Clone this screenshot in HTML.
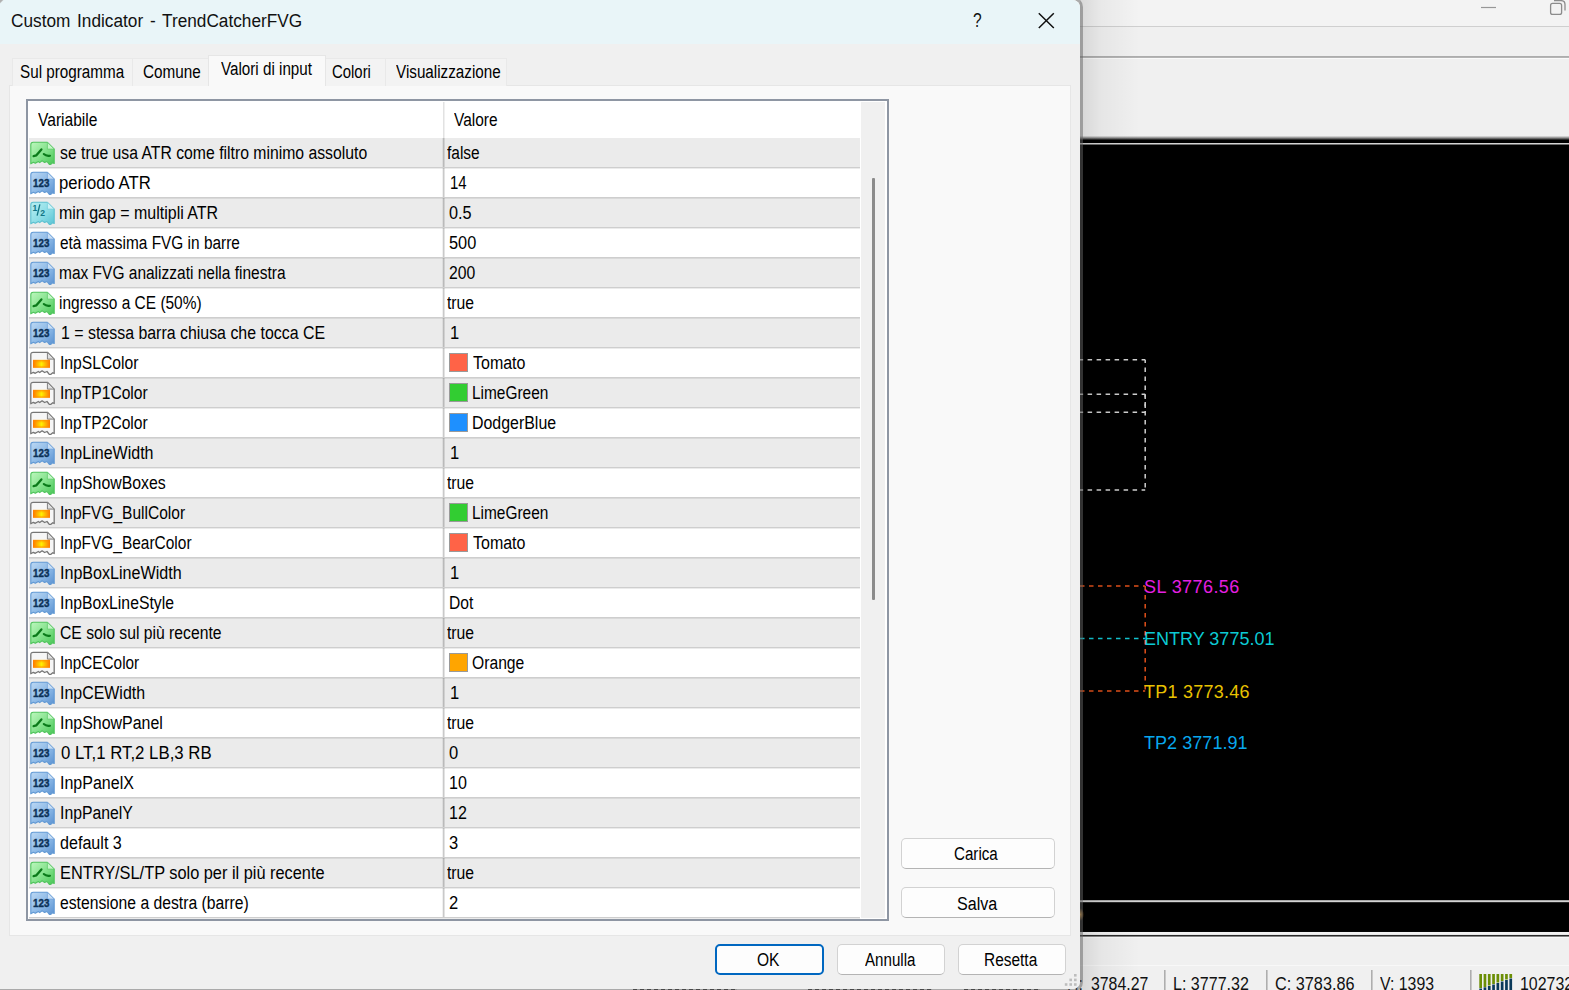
<!DOCTYPE html>
<html lang="it"><head><meta charset="utf-8"><title>Custom Indicator - TrendCatcherFVG</title>
<style>
*{box-sizing:border-box;margin:0;padding:0}
html,body{width:1569px;height:990px;overflow:hidden;background:#f0f0f0}
body{position:relative;font-family:"Liberation Sans",sans-serif;color:#000}
.abs{position:absolute}
/* ---------- background application window ---------- */
#bg{position:absolute;left:0;top:0;width:1569px;height:990px;background:#f0f0f0}
#bgtop{left:0;top:0;width:1569px;height:26px;background:#f3f3f3}
#ln1{left:0;top:26px;width:1569px;height:1px;background:#cfcfcf}
#ln2{left:0;top:56px;width:1569px;height:2px;background:linear-gradient(#a9a9a9,#b9b9b9)}
#ln2b{left:0;top:58px;width:1569px;height:1px;background:#fafafa}
#chart{left:1080px;top:140px;width:489px;height:791px;background:#000}
#chartblur{left:1080px;top:136px;width:489px;height:4px;background:linear-gradient(#e6e6e6,#a4a4a4 35%,#686868 62%,#0c0c0c)}
#cl1{left:1080px;top:143px;width:489px;height:2px;background:linear-gradient(#d4d4d4 50%,#6c6c6c 50%)}
#cl2{left:1080px;top:900px;width:489px;height:3px;background:linear-gradient(#a8a8a8 33.3%,#d4d4d4 33.3%,#d4d4d4 66.6%,#2a2a2a 66.6%)}
#cb1{left:1080px;top:931px;width:489px;height:4px;background:linear-gradient(#000 12%,#787878 25%,#f2f2f2 25%,#f2f2f2 82%,#d0d0d0 100%)}
#cb2{left:1080px;top:935px;width:489px;height:3px;background:linear-gradient(#2a2a2a 33.3%,#858585 33.3%,#858585 66.6%,#f8f8f8 66.6%)}
#stl{left:1080px;top:965px;width:489px;height:1px;background:#f8f8f8}
.lbl{position:absolute;font-size:18px;line-height:20px;white-space:nowrap;letter-spacing:.25px}
.sep{position:absolute;top:970px;width:2px;height:20px;background:linear-gradient(90deg,#a0a0a0,#d6d6d6)}
/* ---------- dialog ---------- */
#shadow{left:1080px;top:0;width:60px;height:990px;background:linear-gradient(90deg,rgba(0,0,0,.11),rgba(0,0,0,.045) 35%,rgba(0,0,0,0))}
#edge{left:-10px;top:-3px;width:1093px;height:995px;border:3px solid rgba(100,100,100,.5);border-radius:10px;background:#f0f0f0;background-clip:padding-box}
#dlg{left:0;top:0;width:1080px;height:989px;background:#f0f0f0;border-radius:0 8px 8px 0;overflow:hidden}
#tbar{left:0;top:0;width:1080px;height:44px;background:#e9f5f8}
#title{left:12px;top:9px;font-size:18px;line-height:22px;white-space:nowrap;color:#111}
#panel{left:9px;top:85px;width:1062px;height:851px;background:#f9f9f9;border:1px solid #e6e6e6}
.tab{position:absolute;top:58px;height:28px;background:#f3f3f3;border:1px solid #e9e9e9;border-bottom:none;font-size:16.5px;line-height:25px;text-align:center;white-space:nowrap;color:#111}
.tab.act{top:55px;height:31px;background:#f9f9f9;line-height:27px;border-color:#e6e6e6}
#tbl{left:26px;top:99px;width:863px;height:822px;border:2px solid #8e96a3;background:#fff}
#tin{position:absolute;left:1px;top:0;width:858px;height:818px;overflow:hidden}
#track{position:absolute;left:832px;top:1px;width:24px;height:816px;background:#f0f0f0}
#thumb{position:absolute;left:843px;top:77px;width:3px;height:422px;background:#8b8b8b;border-radius:1px}
.hd{position:absolute;top:1px;height:37px;background:#fff;font-size:16.5px;line-height:37px;white-space:nowrap}
.row{position:absolute;left:0;width:831px;height:30px;background:#fff;white-space:nowrap}
.row:before{content:"";position:absolute;left:0;top:29px;width:831px;height:2px;background:linear-gradient(#cecece 50%,rgba(0,0,0,.08) 50%);z-index:2}
.row.sh{background:#ebebeb}
.row:after{content:"";position:absolute;left:413px;top:0;width:3px;height:30px;background:linear-gradient(90deg,rgba(0,0,0,.06) 33%,rgba(0,0,0,.21) 33%,rgba(0,0,0,.21) 67%,rgba(0,0,0,.11) 67%)}
.ic{position:absolute;left:1px;top:3px}
.lb{position:absolute;display:inline-block;white-space:nowrap;transform-origin:0 50%;font-size:18.8px;color:#000}
.lb.tx{top:0;line-height:30px}
.lb.tt{font-size:17.4px;line-height:22px;color:#111;word-spacing:2px}
.lb.bt{line-height:22px}
.lb.sb{font-size:17.6px;line-height:22px;color:#111}
.sw{position:absolute;left:420px;top:5px;width:19px;height:19px;border:1px solid #9a9a9a}
.btn{position:absolute;background:#fdfdfd;border:1px solid #d2d2d2;border-bottom-color:#b4b4b4;border-radius:5px;font-size:17px;text-align:center;white-space:nowrap;color:#111}
</style></head>
<body>
<div id="bg">
 <div class="abs" id="bgtop"></div><div class="abs" id="ln1"></div><div class="abs" id="ln2"></div><div class="abs" id="ln2b"></div>
 <svg class="abs" style="left:1470px;top:0" width="99" height="26" viewBox="0 0 99 26"><path d="M11 7.5 H26" stroke="#979797" stroke-width="1.2"/><rect x="80.6" y="3.4" width="11" height="11" rx="2" fill="none" stroke="#8c8c8c" stroke-width="1.3"/><path d="M84 0.6 H91 Q95 0.6 95 4.6 V10.6" fill="none" stroke="#8c8c8c" stroke-width="1.3"/></svg>
 <div class="abs" id="chartblur"></div><div class="abs" id="chart"></div><div class="abs" id="cl1"></div><div class="abs" id="cl2"></div>
 <div class="abs" id="cb1"></div><div class="abs" id="cb2"></div><div class="abs" id="stl"></div>
 <svg class="abs" style="left:1080px;top:340px" width="489" height="380" viewBox="0 0 489 380">
  <g fill="none" stroke="#cfcfcf" stroke-width="1.5" stroke-dasharray="4.5 4.5" stroke-dashoffset="1.4">
   <path d="M0 19.8 H65.2"/><path d="M0 54.3 H65.2"/><path d="M0 72.2 H65.2"/><path d="M0 150 H65.2"/>
   <path d="M65.2 19.8 V72.2"/><path d="M65.2 54.3 V150"/>
  </g>
  <g fill="none" stroke-width="1.5" stroke-dasharray="4.5 4.5">
   <path d="M0 246 H65.2" stroke="#e2501a"/><path d="M0 298.5 H65.2" stroke="#12c4d0"/><path d="M0 351 H65.2" stroke="#e2501a"/>
   <path d="M65.2 246 V351" stroke="#e2501a"/>
  </g>
 </svg>
 <div class="lbl" style="left:1144px;top:577px;color:#e51fe0;letter-spacing:.43px">SL 3776.56</div>
 <div class="lbl" style="left:1144px;top:629px;color:#0ccad4;letter-spacing:0">ENTRY 3775.01</div>
 <div class="lbl" style="left:1144px;top:682px;color:#e8c200">TP1 3773.46</div>
 <div class="lbl" style="left:1144px;top:733px;color:#08a8ee;letter-spacing:.05px">TP2 3771.91</div>
 <div class="sep" style="left:1164px"></div><div class="sep" style="left:1266px"></div><div class="sep" style="left:1371px"></div><div class="sep" style="left:1470px"></div>
 <span id="s0" class="lb sb" style="left:1066.5px;transform:scaleX(0.9);top:973.0px;">H:</span><span id="s1" class="lb sb" style="left:1091.0px;transform:scaleX(0.9004);top:973.0px;">3784.27</span><span id="s2" class="lb sb" style="left:1173.0px;transform:scaleX(0.9125);top:973.0px;">L: 3777.32</span><span id="s3" class="lb sb" style="left:1275.0px;transform:scaleX(0.9236);top:973.0px;">C: 3783.86</span><span id="s4" class="lb sb" style="left:1380.0px;transform:scaleX(0.9002);top:973.0px;">V: 1393</span><span id="s5" class="lb sb" style="left:1520px;transform:scaleX(0.905);top:973.0px;">1027326</span>
 <svg class="abs" style="left:1478px;top:972px" width="38" height="18" viewBox="0 0 38 18">
  <g fill="#6b8e05"><rect x="1.3" y="2" width="2.7" height="14"/><rect x="5.6" y="2" width="2.7" height="13"/><rect x="9.9" y="2" width="2.7" height="11.5"/><rect x="14.2" y="2" width="2.7" height="10"/><rect x="18.5" y="2" width="2.7" height="8.5"/><rect x="22.8" y="2" width="2.7" height="7"/><rect x="27.1" y="2" width="2.7" height="5.5"/><rect x="31.4" y="2" width="2.7" height="4"/></g>
  <g fill="#0b3a5a"><rect x="1.3" y="16.5" width="2.7" height="2"/><rect x="5.6" y="15.3" width="2.7" height="3"/><rect x="9.9" y="14" width="2.7" height="4"/><rect x="14.2" y="12.5" width="2.7" height="6"/><rect x="18.5" y="11" width="2.7" height="7"/><rect x="22.8" y="9.5" width="2.7" height="9"/><rect x="27.1" y="8" width="2.7" height="10"/><rect x="31.4" y="6.5" width="2.7" height="12"/></g>
 </svg>
</div>
<div class="abs" style="left:1077px;top:908px;width:7px;height:13px;background:radial-gradient(ellipse at center,rgba(215,150,60,.95),rgba(215,150,60,0) 70%)"></div>
<div class="abs" id="shadow"></div>
<div class="abs" id="edge"></div>
<div class="abs" style="left:633px;top:988px;width:104px;height:2px;background:repeating-linear-gradient(90deg,rgba(40,40,40,.75) 0 4px,rgba(40,40,40,.15) 4px 7px)"></div>
<div class="abs" style="left:808px;top:988px;width:124px;height:2px;background:repeating-linear-gradient(90deg,rgba(40,40,40,.75) 0 4px,rgba(40,40,40,.15) 4px 7px)"></div>
<div class="abs" style="left:964px;top:988px;width:76px;height:2px;background:repeating-linear-gradient(90deg,rgba(40,40,40,.75) 0 4px,rgba(40,40,40,.15) 4px 7px)"></div>
<div class="abs" id="dlg">
 <div class="abs" id="tbar"></div>
 <span id="title" class="lb tt" style="left:11.0px;transform:scaleX(0.9575);top:10.0px;">Custom Indicator - TrendCatcherFVG</span>
 <svg class="abs" style="left:960px;top:5px" width="110" height="34" viewBox="0 0 110 34"><path d="M78.8 8.2 L93.8 23 M93.8 8.2 L78.8 23" stroke="#111" stroke-width="1.5" fill="none"/></svg>
 <div class="abs" style="left:972.5px;top:9px;font-size:21px;line-height:22px;color:#111;transform:scaleX(.74);transform-origin:0 50%">?</div>
 <div class="abs" id="panel"></div>
 <div class="tab" style="left:12px;width:121px"></div><span id="t1" class="lb bt" style="left:19.5px;transform:scaleX(0.8112);top:61.0px;">Sul programma</span>
 <div class="tab" style="left:132px;width:77px"></div><span id="t2" class="lb bt" style="left:142.5px;transform:scaleX(0.8133);top:61.0px;">Comune</span>
 <div class="tab" style="left:325px;width:61px"></div><span id="t4" class="lb bt" style="left:331.5px;transform:scaleX(0.7935);top:61.0px;">Colori</span>
 <div class="tab" style="left:385px;width:122px"></div><span id="t5" class="lb bt" style="left:395.5px;transform:scaleX(0.8114);top:61.0px;">Visualizzazione</span>
 <div class="tab act" style="left:208px;width:118px"></div><span id="t3" class="lb bt" style="left:220.5px;transform:scaleX(0.8096);top:58.0px;">Valori di input</span>
 <div class="abs" id="tbl"><div id="tin">
  <div class="hd" style="left:1px;width:414px"></div><span id="h1" class="lb bt" style="left:9.0px;transform:scaleX(0.829);top:8.0px;">Variabile</span>
  <div class="hd" style="left:417px;width:413px"></div><span id="h2" class="lb bt" style="left:425.0px;transform:scaleX(0.8229);top:8.0px;">Valore</span>
  <div class="abs" style="left:414px;top:1px;width:2px;height:37px;background:linear-gradient(90deg,#e2e2e2 50%,#f0f0f0 50%)"></div>
  <div id="track"></div><div id="thumb"></div>
<div class="row sh" style="top:37px"><svg class="ic" width="25" height="24" viewBox="0 0 25 24"><defs><linearGradient id="g0" x1="0" y1="0" x2="1" y2="1"><stop offset="0" stop-color="#bdf7bd"/><stop offset=".55" stop-color="#7fe088"/><stop offset="1" stop-color="#45c454"/></linearGradient></defs><g transform="translate(0,.5)"><path d="M3.2 0.8 H17.4 L24.2 7.6 V22 L22.8 21.2 L19.9 23.6 L17 20 L14.6 21 L12.1 19.3 L9.7 21.1 L8.3 20 L5.3 21.8 L3.4 20.8 L0.8 22.3 V3.2 Q0.8 0.8 3.2 0.8 Z" fill="url(#g0)" stroke="#4fc45c" stroke-width="1.1" stroke-linejoin="round"/><path d="M17.4 0.8 V7.6 H24.2 Z" fill="#c6f6c8" stroke="#63cc6e" stroke-width=".8"/><path d="M3.6 14.6 L6.4 13.8 L11.4 7.9" fill="none" stroke="#0b7a1a" stroke-width="2.3" stroke-linecap="round" stroke-linejoin="round"/><path d="M13.8 12.6 Q16.2 14.9 20 14.2" fill="none" stroke="#0b7a1a" stroke-width="2.1" stroke-linecap="round"/></g></svg><span id="n0" class="lb tx" style="left:31.0px;transform:scaleX(0.8392);">se true usa ATR come filtro minimo assoluto</span><span id="v0" class="lb tx" style="left:418.0px;transform:scaleX(0.8243);">false</span></div>
<div class="row" style="top:67px"><svg class="ic" width="25" height="24" viewBox="0 0 25 24"><defs><linearGradient id="g1" x1="0" y1="0" x2="1" y2="1"><stop offset="0" stop-color="#bcd8f4"/><stop offset=".55" stop-color="#8bb8e6"/><stop offset="1" stop-color="#5990d0"/></linearGradient></defs><g transform="translate(0,.5)"><path d="M3.2 0.8 H17.4 L24.2 7.6 V22 L22.8 21.2 L19.9 23.6 L17 20 L14.6 21 L12.1 19.3 L9.7 21.1 L8.3 20 L5.3 21.8 L3.4 20.8 L0.8 22.3 V3.2 Q0.8 0.8 3.2 0.8 Z" fill="url(#g1)" stroke="#6199d4" stroke-width="1.1" stroke-linejoin="round"/><path d="M17.4 0.8 V7.6 H24.2 Z" fill="#c8def4" stroke="#76a6dc" stroke-width=".8"/><text x="11.2" y="15.9" text-anchor="middle" font-family="Liberation Sans, sans-serif" font-weight="bold" font-size="10.2" textLength="16.2" lengthAdjust="spacingAndGlyphs" fill="#0c3157" stroke="#0c3157" stroke-width=".4">123</text></g></svg><span id="n1" class="lb tx" style="left:30.0px;transform:scaleX(0.8903);">periodo ATR</span><span id="v1" class="lb tx" style="left:421.0px;transform:scaleX(0.7971);">14</span></div>
<div class="row sh" style="top:97px"><svg class="ic" width="25" height="24" viewBox="0 0 25 24"><defs><linearGradient id="g2" x1="0" y1="0" x2="1" y2="1"><stop offset="0" stop-color="#b8eef2"/><stop offset=".55" stop-color="#8cdde6"/><stop offset="1" stop-color="#56c2d4"/></linearGradient></defs><g transform="translate(0,.5)"><path d="M3.2 0.8 H17.4 L24.2 7.6 V22 L22.8 21.2 L19.9 23.6 L17 20 L14.6 21 L12.1 19.3 L9.7 21.1 L8.3 20 L5.3 21.8 L3.4 20.8 L0.8 22.3 V3.2 Q0.8 0.8 3.2 0.8 Z" fill="url(#g2)" stroke="#5cc0d0" stroke-width="1.1" stroke-linejoin="round"/><path d="M17.4 0.8 V7.6 H24.2 Z" fill="#cdf2f6" stroke="#78cfdc" stroke-width=".8"/><text x="2.4" y="9.2" font-family="Liberation Sans, sans-serif" font-weight="bold" font-size="8.6" fill="#127585">1</text><path d="M9.9 2.8 L7.1 14.2" stroke="#127585" stroke-width="1.3" fill="none"/><text x="10.2" y="14.4" font-family="Liberation Sans, sans-serif" font-weight="bold" font-size="8.6" fill="#127585">2</text></g></svg><span id="n2" class="lb tx" style="left:30.0px;transform:scaleX(0.8505);">min gap = multipli ATR</span><span id="v2" class="lb tx" style="left:420.0px;transform:scaleX(0.8644);">0.5</span></div>
<div class="row" style="top:127px"><svg class="ic" width="25" height="24" viewBox="0 0 25 24"><defs><linearGradient id="g3" x1="0" y1="0" x2="1" y2="1"><stop offset="0" stop-color="#bcd8f4"/><stop offset=".55" stop-color="#8bb8e6"/><stop offset="1" stop-color="#5990d0"/></linearGradient></defs><g transform="translate(0,.5)"><path d="M3.2 0.8 H17.4 L24.2 7.6 V22 L22.8 21.2 L19.9 23.6 L17 20 L14.6 21 L12.1 19.3 L9.7 21.1 L8.3 20 L5.3 21.8 L3.4 20.8 L0.8 22.3 V3.2 Q0.8 0.8 3.2 0.8 Z" fill="url(#g3)" stroke="#6199d4" stroke-width="1.1" stroke-linejoin="round"/><path d="M17.4 0.8 V7.6 H24.2 Z" fill="#c8def4" stroke="#76a6dc" stroke-width=".8"/><text x="11.2" y="15.9" text-anchor="middle" font-family="Liberation Sans, sans-serif" font-weight="bold" font-size="10.2" textLength="16.2" lengthAdjust="spacingAndGlyphs" fill="#0c3157" stroke="#0c3157" stroke-width=".4">123</text></g></svg><span id="n3" class="lb tx" style="left:31.0px;transform:scaleX(0.8207);">età massima FVG in barre</span><span id="v3" class="lb tx" style="left:420.0px;transform:scaleX(0.8696);">500</span></div>
<div class="row sh" style="top:157px"><svg class="ic" width="25" height="24" viewBox="0 0 25 24"><defs><linearGradient id="g4" x1="0" y1="0" x2="1" y2="1"><stop offset="0" stop-color="#bcd8f4"/><stop offset=".55" stop-color="#8bb8e6"/><stop offset="1" stop-color="#5990d0"/></linearGradient></defs><g transform="translate(0,.5)"><path d="M3.2 0.8 H17.4 L24.2 7.6 V22 L22.8 21.2 L19.9 23.6 L17 20 L14.6 21 L12.1 19.3 L9.7 21.1 L8.3 20 L5.3 21.8 L3.4 20.8 L0.8 22.3 V3.2 Q0.8 0.8 3.2 0.8 Z" fill="url(#g4)" stroke="#6199d4" stroke-width="1.1" stroke-linejoin="round"/><path d="M17.4 0.8 V7.6 H24.2 Z" fill="#c8def4" stroke="#76a6dc" stroke-width=".8"/><text x="11.2" y="15.9" text-anchor="middle" font-family="Liberation Sans, sans-serif" font-weight="bold" font-size="10.2" textLength="16.2" lengthAdjust="spacingAndGlyphs" fill="#0c3157" stroke="#0c3157" stroke-width=".4">123</text></g></svg><span id="n4" class="lb tx" style="left:30.0px;transform:scaleX(0.8253);">max FVG analizzati nella finestra</span><span id="v4" class="lb tx" style="left:420.0px;transform:scaleX(0.8365);">200</span></div>
<div class="row" style="top:187px"><svg class="ic" width="25" height="24" viewBox="0 0 25 24"><defs><linearGradient id="g5" x1="0" y1="0" x2="1" y2="1"><stop offset="0" stop-color="#bdf7bd"/><stop offset=".55" stop-color="#7fe088"/><stop offset="1" stop-color="#45c454"/></linearGradient></defs><g transform="translate(0,.5)"><path d="M3.2 0.8 H17.4 L24.2 7.6 V22 L22.8 21.2 L19.9 23.6 L17 20 L14.6 21 L12.1 19.3 L9.7 21.1 L8.3 20 L5.3 21.8 L3.4 20.8 L0.8 22.3 V3.2 Q0.8 0.8 3.2 0.8 Z" fill="url(#g5)" stroke="#4fc45c" stroke-width="1.1" stroke-linejoin="round"/><path d="M17.4 0.8 V7.6 H24.2 Z" fill="#c6f6c8" stroke="#63cc6e" stroke-width=".8"/><path d="M3.6 14.6 L6.4 13.8 L11.4 7.9" fill="none" stroke="#0b7a1a" stroke-width="2.3" stroke-linecap="round" stroke-linejoin="round"/><path d="M13.8 12.6 Q16.2 14.9 20 14.2" fill="none" stroke="#0b7a1a" stroke-width="2.1" stroke-linecap="round"/></g></svg><span id="n5" class="lb tx" style="left:30.0px;transform:scaleX(0.823);">ingresso a CE (50%)</span><span id="v5" class="lb tx" style="left:418.0px;transform:scaleX(0.838);">true</span></div>
<div class="row sh" style="top:217px"><svg class="ic" width="25" height="24" viewBox="0 0 25 24"><defs><linearGradient id="g6" x1="0" y1="0" x2="1" y2="1"><stop offset="0" stop-color="#bcd8f4"/><stop offset=".55" stop-color="#8bb8e6"/><stop offset="1" stop-color="#5990d0"/></linearGradient></defs><g transform="translate(0,.5)"><path d="M3.2 0.8 H17.4 L24.2 7.6 V22 L22.8 21.2 L19.9 23.6 L17 20 L14.6 21 L12.1 19.3 L9.7 21.1 L8.3 20 L5.3 21.8 L3.4 20.8 L0.8 22.3 V3.2 Q0.8 0.8 3.2 0.8 Z" fill="url(#g6)" stroke="#6199d4" stroke-width="1.1" stroke-linejoin="round"/><path d="M17.4 0.8 V7.6 H24.2 Z" fill="#c8def4" stroke="#76a6dc" stroke-width=".8"/><text x="11.2" y="15.9" text-anchor="middle" font-family="Liberation Sans, sans-serif" font-weight="bold" font-size="10.2" textLength="16.2" lengthAdjust="spacingAndGlyphs" fill="#0c3157" stroke="#0c3157" stroke-width=".4">123</text></g></svg><span id="n6" class="lb tx" style="left:32.0px;transform:scaleX(0.8473);">1 = stessa barra chiusa che tocca CE</span><span id="v6" class="lb tx" style="left:421.0px;transform:scaleX(0.88);">1</span></div>
<div class="row" style="top:247px"><svg class="ic" width="25" height="24" viewBox="0 0 25 24"><defs><linearGradient id="g7" x1="0" y1="0" x2="1" y2="0"><stop offset="0" stop-color="#ff7400"/><stop offset=".5" stop-color="#fff000"/><stop offset="1" stop-color="#ff7400"/></linearGradient><linearGradient id="h7" x1="0" y1="0" x2="0" y2="1"><stop offset="0" stop-color="#ff8a00" stop-opacity=".85"/><stop offset=".4" stop-color="#ff8a00" stop-opacity="0"/><stop offset=".7" stop-color="#ff8a00" stop-opacity="0"/><stop offset="1" stop-color="#ff8a00" stop-opacity=".85"/></linearGradient></defs><g transform="translate(0,.5)"><path d="M3.2 0.8 H17.4 L24.2 7.6 V22 L22.8 21.2 L19.9 23.6 L17 20 L14.6 21 L12.1 19.3 L9.7 21.1 L8.3 20 L5.3 21.8 L3.4 20.8 L0.8 22.3 V3.2 Q0.8 0.8 3.2 0.8 Z" fill="#f6f6f6" stroke="#767676" stroke-width="1.3" stroke-linejoin="round"/><path d="M17.4 0.8 V7.6 H24.2 Z" fill="#e0e0e0" stroke="#808080" stroke-width="1"/><rect x="3" y="8.4" width="17" height="7.8" fill="url(#g7)"/><rect x="3" y="8.4" width="17" height="7.8" fill="url(#h7)"/></g></svg><span id="n7" class="lb tx" style="left:31.0px;transform:scaleX(0.835);">InpSLColor</span><span class="sw" style="background:#ff6347"></span><span id="v7" class="lb tx" style="left:444.0px;transform:scaleX(0.8511);">Tomato</span></div>
<div class="row sh" style="top:277px"><svg class="ic" width="25" height="24" viewBox="0 0 25 24"><defs><linearGradient id="g8" x1="0" y1="0" x2="1" y2="0"><stop offset="0" stop-color="#ff7400"/><stop offset=".5" stop-color="#fff000"/><stop offset="1" stop-color="#ff7400"/></linearGradient><linearGradient id="h8" x1="0" y1="0" x2="0" y2="1"><stop offset="0" stop-color="#ff8a00" stop-opacity=".85"/><stop offset=".4" stop-color="#ff8a00" stop-opacity="0"/><stop offset=".7" stop-color="#ff8a00" stop-opacity="0"/><stop offset="1" stop-color="#ff8a00" stop-opacity=".85"/></linearGradient></defs><g transform="translate(0,.5)"><path d="M3.2 0.8 H17.4 L24.2 7.6 V22 L22.8 21.2 L19.9 23.6 L17 20 L14.6 21 L12.1 19.3 L9.7 21.1 L8.3 20 L5.3 21.8 L3.4 20.8 L0.8 22.3 V3.2 Q0.8 0.8 3.2 0.8 Z" fill="#f6f6f6" stroke="#767676" stroke-width="1.3" stroke-linejoin="round"/><path d="M17.4 0.8 V7.6 H24.2 Z" fill="#e0e0e0" stroke="#808080" stroke-width="1"/><rect x="3" y="8.4" width="17" height="7.8" fill="url(#g8)"/><rect x="3" y="8.4" width="17" height="7.8" fill="url(#h8)"/></g></svg><span id="n8" class="lb tx" style="left:31.0px;transform:scaleX(0.8321);">InpTP1Color</span><span class="sw" style="background:#32cd32"></span><span id="v8" class="lb tx" style="left:443.0px;transform:scaleX(0.8218);">LimeGreen</span></div>
<div class="row" style="top:307px"><svg class="ic" width="25" height="24" viewBox="0 0 25 24"><defs><linearGradient id="g9" x1="0" y1="0" x2="1" y2="0"><stop offset="0" stop-color="#ff7400"/><stop offset=".5" stop-color="#fff000"/><stop offset="1" stop-color="#ff7400"/></linearGradient><linearGradient id="h9" x1="0" y1="0" x2="0" y2="1"><stop offset="0" stop-color="#ff8a00" stop-opacity=".85"/><stop offset=".4" stop-color="#ff8a00" stop-opacity="0"/><stop offset=".7" stop-color="#ff8a00" stop-opacity="0"/><stop offset="1" stop-color="#ff8a00" stop-opacity=".85"/></linearGradient></defs><g transform="translate(0,.5)"><path d="M3.2 0.8 H17.4 L24.2 7.6 V22 L22.8 21.2 L19.9 23.6 L17 20 L14.6 21 L12.1 19.3 L9.7 21.1 L8.3 20 L5.3 21.8 L3.4 20.8 L0.8 22.3 V3.2 Q0.8 0.8 3.2 0.8 Z" fill="#f6f6f6" stroke="#767676" stroke-width="1.3" stroke-linejoin="round"/><path d="M17.4 0.8 V7.6 H24.2 Z" fill="#e0e0e0" stroke="#808080" stroke-width="1"/><rect x="3" y="8.4" width="17" height="7.8" fill="url(#g9)"/><rect x="3" y="8.4" width="17" height="7.8" fill="url(#h9)"/></g></svg><span id="n9" class="lb tx" style="left:31.0px;transform:scaleX(0.8321);">InpTP2Color</span><span class="sw" style="background:#1e90ff"></span><span id="v9" class="lb tx" style="left:443.0px;transform:scaleX(0.848);">DodgerBlue</span></div>
<div class="row sh" style="top:337px"><svg class="ic" width="25" height="24" viewBox="0 0 25 24"><defs><linearGradient id="g10" x1="0" y1="0" x2="1" y2="1"><stop offset="0" stop-color="#bcd8f4"/><stop offset=".55" stop-color="#8bb8e6"/><stop offset="1" stop-color="#5990d0"/></linearGradient></defs><g transform="translate(0,.5)"><path d="M3.2 0.8 H17.4 L24.2 7.6 V22 L22.8 21.2 L19.9 23.6 L17 20 L14.6 21 L12.1 19.3 L9.7 21.1 L8.3 20 L5.3 21.8 L3.4 20.8 L0.8 22.3 V3.2 Q0.8 0.8 3.2 0.8 Z" fill="url(#g10)" stroke="#6199d4" stroke-width="1.1" stroke-linejoin="round"/><path d="M17.4 0.8 V7.6 H24.2 Z" fill="#c8def4" stroke="#76a6dc" stroke-width=".8"/><text x="11.2" y="15.9" text-anchor="middle" font-family="Liberation Sans, sans-serif" font-weight="bold" font-size="10.2" textLength="16.2" lengthAdjust="spacingAndGlyphs" fill="#0c3157" stroke="#0c3157" stroke-width=".4">123</text></g></svg><span id="n10" class="lb tx" style="left:31.0px;transform:scaleX(0.8532);">InpLineWidth</span><span id="v10" class="lb tx" style="left:421.0px;transform:scaleX(0.88);">1</span></div>
<div class="row" style="top:367px"><svg class="ic" width="25" height="24" viewBox="0 0 25 24"><defs><linearGradient id="g11" x1="0" y1="0" x2="1" y2="1"><stop offset="0" stop-color="#bdf7bd"/><stop offset=".55" stop-color="#7fe088"/><stop offset="1" stop-color="#45c454"/></linearGradient></defs><g transform="translate(0,.5)"><path d="M3.2 0.8 H17.4 L24.2 7.6 V22 L22.8 21.2 L19.9 23.6 L17 20 L14.6 21 L12.1 19.3 L9.7 21.1 L8.3 20 L5.3 21.8 L3.4 20.8 L0.8 22.3 V3.2 Q0.8 0.8 3.2 0.8 Z" fill="url(#g11)" stroke="#4fc45c" stroke-width="1.1" stroke-linejoin="round"/><path d="M17.4 0.8 V7.6 H24.2 Z" fill="#c6f6c8" stroke="#63cc6e" stroke-width=".8"/><path d="M3.6 14.6 L6.4 13.8 L11.4 7.9" fill="none" stroke="#0b7a1a" stroke-width="2.3" stroke-linecap="round" stroke-linejoin="round"/><path d="M13.8 12.6 Q16.2 14.9 20 14.2" fill="none" stroke="#0b7a1a" stroke-width="2.1" stroke-linecap="round"/></g></svg><span id="n11" class="lb tx" style="left:31.0px;transform:scaleX(0.8434);">InpShowBoxes</span><span id="v11" class="lb tx" style="left:418.0px;transform:scaleX(0.838);">true</span></div>
<div class="row sh" style="top:397px"><svg class="ic" width="25" height="24" viewBox="0 0 25 24"><defs><linearGradient id="g12" x1="0" y1="0" x2="1" y2="0"><stop offset="0" stop-color="#ff7400"/><stop offset=".5" stop-color="#fff000"/><stop offset="1" stop-color="#ff7400"/></linearGradient><linearGradient id="h12" x1="0" y1="0" x2="0" y2="1"><stop offset="0" stop-color="#ff8a00" stop-opacity=".85"/><stop offset=".4" stop-color="#ff8a00" stop-opacity="0"/><stop offset=".7" stop-color="#ff8a00" stop-opacity="0"/><stop offset="1" stop-color="#ff8a00" stop-opacity=".85"/></linearGradient></defs><g transform="translate(0,.5)"><path d="M3.2 0.8 H17.4 L24.2 7.6 V22 L22.8 21.2 L19.9 23.6 L17 20 L14.6 21 L12.1 19.3 L9.7 21.1 L8.3 20 L5.3 21.8 L3.4 20.8 L0.8 22.3 V3.2 Q0.8 0.8 3.2 0.8 Z" fill="#f6f6f6" stroke="#767676" stroke-width="1.3" stroke-linejoin="round"/><path d="M17.4 0.8 V7.6 H24.2 Z" fill="#e0e0e0" stroke="#808080" stroke-width="1"/><rect x="3" y="8.4" width="17" height="7.8" fill="url(#g12)"/><rect x="3" y="8.4" width="17" height="7.8" fill="url(#h12)"/></g></svg><span id="n12" class="lb tx" style="left:31.0px;transform:scaleX(0.8263);">InpFVG_BullColor</span><span class="sw" style="background:#32cd32"></span><span id="v12" class="lb tx" style="left:443.0px;transform:scaleX(0.8218);">LimeGreen</span></div>
<div class="row" style="top:427px"><svg class="ic" width="25" height="24" viewBox="0 0 25 24"><defs><linearGradient id="g13" x1="0" y1="0" x2="1" y2="0"><stop offset="0" stop-color="#ff7400"/><stop offset=".5" stop-color="#fff000"/><stop offset="1" stop-color="#ff7400"/></linearGradient><linearGradient id="h13" x1="0" y1="0" x2="0" y2="1"><stop offset="0" stop-color="#ff8a00" stop-opacity=".85"/><stop offset=".4" stop-color="#ff8a00" stop-opacity="0"/><stop offset=".7" stop-color="#ff8a00" stop-opacity="0"/><stop offset="1" stop-color="#ff8a00" stop-opacity=".85"/></linearGradient></defs><g transform="translate(0,.5)"><path d="M3.2 0.8 H17.4 L24.2 7.6 V22 L22.8 21.2 L19.9 23.6 L17 20 L14.6 21 L12.1 19.3 L9.7 21.1 L8.3 20 L5.3 21.8 L3.4 20.8 L0.8 22.3 V3.2 Q0.8 0.8 3.2 0.8 Z" fill="#f6f6f6" stroke="#767676" stroke-width="1.3" stroke-linejoin="round"/><path d="M17.4 0.8 V7.6 H24.2 Z" fill="#e0e0e0" stroke="#808080" stroke-width="1"/><rect x="3" y="8.4" width="17" height="7.8" fill="url(#g13)"/><rect x="3" y="8.4" width="17" height="7.8" fill="url(#h13)"/></g></svg><span id="n13" class="lb tx" style="left:31.0px;transform:scaleX(0.8236);">InpFVG_BearColor</span><span class="sw" style="background:#ff6347"></span><span id="v13" class="lb tx" style="left:444.0px;transform:scaleX(0.8511);">Tomato</span></div>
<div class="row sh" style="top:457px"><svg class="ic" width="25" height="24" viewBox="0 0 25 24"><defs><linearGradient id="g14" x1="0" y1="0" x2="1" y2="1"><stop offset="0" stop-color="#bcd8f4"/><stop offset=".55" stop-color="#8bb8e6"/><stop offset="1" stop-color="#5990d0"/></linearGradient></defs><g transform="translate(0,.5)"><path d="M3.2 0.8 H17.4 L24.2 7.6 V22 L22.8 21.2 L19.9 23.6 L17 20 L14.6 21 L12.1 19.3 L9.7 21.1 L8.3 20 L5.3 21.8 L3.4 20.8 L0.8 22.3 V3.2 Q0.8 0.8 3.2 0.8 Z" fill="url(#g14)" stroke="#6199d4" stroke-width="1.1" stroke-linejoin="round"/><path d="M17.4 0.8 V7.6 H24.2 Z" fill="#c8def4" stroke="#76a6dc" stroke-width=".8"/><text x="11.2" y="15.9" text-anchor="middle" font-family="Liberation Sans, sans-serif" font-weight="bold" font-size="10.2" textLength="16.2" lengthAdjust="spacingAndGlyphs" fill="#0c3157" stroke="#0c3157" stroke-width=".4">123</text></g></svg><span id="n14" class="lb tx" style="left:31.0px;transform:scaleX(0.8567);">InpBoxLineWidth</span><span id="v14" class="lb tx" style="left:421.0px;transform:scaleX(0.88);">1</span></div>
<div class="row" style="top:487px"><svg class="ic" width="25" height="24" viewBox="0 0 25 24"><defs><linearGradient id="g15" x1="0" y1="0" x2="1" y2="1"><stop offset="0" stop-color="#bcd8f4"/><stop offset=".55" stop-color="#8bb8e6"/><stop offset="1" stop-color="#5990d0"/></linearGradient></defs><g transform="translate(0,.5)"><path d="M3.2 0.8 H17.4 L24.2 7.6 V22 L22.8 21.2 L19.9 23.6 L17 20 L14.6 21 L12.1 19.3 L9.7 21.1 L8.3 20 L5.3 21.8 L3.4 20.8 L0.8 22.3 V3.2 Q0.8 0.8 3.2 0.8 Z" fill="url(#g15)" stroke="#6199d4" stroke-width="1.1" stroke-linejoin="round"/><path d="M17.4 0.8 V7.6 H24.2 Z" fill="#c8def4" stroke="#76a6dc" stroke-width=".8"/><text x="11.2" y="15.9" text-anchor="middle" font-family="Liberation Sans, sans-serif" font-weight="bold" font-size="10.2" textLength="16.2" lengthAdjust="spacingAndGlyphs" fill="#0c3157" stroke="#0c3157" stroke-width=".4">123</text></g></svg><span id="n15" class="lb tx" style="left:31.0px;transform:scaleX(0.8396);">InpBoxLineStyle</span><span id="v15" class="lb tx" style="left:420.0px;transform:scaleX(0.8311);">Dot</span></div>
<div class="row sh" style="top:517px"><svg class="ic" width="25" height="24" viewBox="0 0 25 24"><defs><linearGradient id="g16" x1="0" y1="0" x2="1" y2="1"><stop offset="0" stop-color="#bdf7bd"/><stop offset=".55" stop-color="#7fe088"/><stop offset="1" stop-color="#45c454"/></linearGradient></defs><g transform="translate(0,.5)"><path d="M3.2 0.8 H17.4 L24.2 7.6 V22 L22.8 21.2 L19.9 23.6 L17 20 L14.6 21 L12.1 19.3 L9.7 21.1 L8.3 20 L5.3 21.8 L3.4 20.8 L0.8 22.3 V3.2 Q0.8 0.8 3.2 0.8 Z" fill="url(#g16)" stroke="#4fc45c" stroke-width="1.1" stroke-linejoin="round"/><path d="M17.4 0.8 V7.6 H24.2 Z" fill="#c6f6c8" stroke="#63cc6e" stroke-width=".8"/><path d="M3.6 14.6 L6.4 13.8 L11.4 7.9" fill="none" stroke="#0b7a1a" stroke-width="2.3" stroke-linecap="round" stroke-linejoin="round"/><path d="M13.8 12.6 Q16.2 14.9 20 14.2" fill="none" stroke="#0b7a1a" stroke-width="2.1" stroke-linecap="round"/></g></svg><span id="n16" class="lb tx" style="left:31.0px;transform:scaleX(0.8362);">CE solo sul più recente</span><span id="v16" class="lb tx" style="left:418.0px;transform:scaleX(0.838);">true</span></div>
<div class="row" style="top:547px"><svg class="ic" width="25" height="24" viewBox="0 0 25 24"><defs><linearGradient id="g17" x1="0" y1="0" x2="1" y2="0"><stop offset="0" stop-color="#ff7400"/><stop offset=".5" stop-color="#fff000"/><stop offset="1" stop-color="#ff7400"/></linearGradient><linearGradient id="h17" x1="0" y1="0" x2="0" y2="1"><stop offset="0" stop-color="#ff8a00" stop-opacity=".85"/><stop offset=".4" stop-color="#ff8a00" stop-opacity="0"/><stop offset=".7" stop-color="#ff8a00" stop-opacity="0"/><stop offset="1" stop-color="#ff8a00" stop-opacity=".85"/></linearGradient></defs><g transform="translate(0,.5)"><path d="M3.2 0.8 H17.4 L24.2 7.6 V22 L22.8 21.2 L19.9 23.6 L17 20 L14.6 21 L12.1 19.3 L9.7 21.1 L8.3 20 L5.3 21.8 L3.4 20.8 L0.8 22.3 V3.2 Q0.8 0.8 3.2 0.8 Z" fill="#f6f6f6" stroke="#767676" stroke-width="1.3" stroke-linejoin="round"/><path d="M17.4 0.8 V7.6 H24.2 Z" fill="#e0e0e0" stroke="#808080" stroke-width="1"/><rect x="3" y="8.4" width="17" height="7.8" fill="url(#g17)"/><rect x="3" y="8.4" width="17" height="7.8" fill="url(#h17)"/></g></svg><span id="n17" class="lb tx" style="left:31.0px;transform:scaleX(0.8154);">InpCEColor</span><span class="sw" style="background:#ffa500"></span><span id="v17" class="lb tx" style="left:443.0px;transform:scaleX(0.8348);">Orange</span></div>
<div class="row sh" style="top:577px"><svg class="ic" width="25" height="24" viewBox="0 0 25 24"><defs><linearGradient id="g18" x1="0" y1="0" x2="1" y2="1"><stop offset="0" stop-color="#bcd8f4"/><stop offset=".55" stop-color="#8bb8e6"/><stop offset="1" stop-color="#5990d0"/></linearGradient></defs><g transform="translate(0,.5)"><path d="M3.2 0.8 H17.4 L24.2 7.6 V22 L22.8 21.2 L19.9 23.6 L17 20 L14.6 21 L12.1 19.3 L9.7 21.1 L8.3 20 L5.3 21.8 L3.4 20.8 L0.8 22.3 V3.2 Q0.8 0.8 3.2 0.8 Z" fill="url(#g18)" stroke="#6199d4" stroke-width="1.1" stroke-linejoin="round"/><path d="M17.4 0.8 V7.6 H24.2 Z" fill="#c8def4" stroke="#76a6dc" stroke-width=".8"/><text x="11.2" y="15.9" text-anchor="middle" font-family="Liberation Sans, sans-serif" font-weight="bold" font-size="10.2" textLength="16.2" lengthAdjust="spacingAndGlyphs" fill="#0c3157" stroke="#0c3157" stroke-width=".4">123</text></g></svg><span id="n18" class="lb tx" style="left:31.0px;transform:scaleX(0.8486);">InpCEWidth</span><span id="v18" class="lb tx" style="left:421.0px;transform:scaleX(0.88);">1</span></div>
<div class="row" style="top:607px"><svg class="ic" width="25" height="24" viewBox="0 0 25 24"><defs><linearGradient id="g19" x1="0" y1="0" x2="1" y2="1"><stop offset="0" stop-color="#bdf7bd"/><stop offset=".55" stop-color="#7fe088"/><stop offset="1" stop-color="#45c454"/></linearGradient></defs><g transform="translate(0,.5)"><path d="M3.2 0.8 H17.4 L24.2 7.6 V22 L22.8 21.2 L19.9 23.6 L17 20 L14.6 21 L12.1 19.3 L9.7 21.1 L8.3 20 L5.3 21.8 L3.4 20.8 L0.8 22.3 V3.2 Q0.8 0.8 3.2 0.8 Z" fill="url(#g19)" stroke="#4fc45c" stroke-width="1.1" stroke-linejoin="round"/><path d="M17.4 0.8 V7.6 H24.2 Z" fill="#c6f6c8" stroke="#63cc6e" stroke-width=".8"/><path d="M3.6 14.6 L6.4 13.8 L11.4 7.9" fill="none" stroke="#0b7a1a" stroke-width="2.3" stroke-linecap="round" stroke-linejoin="round"/><path d="M13.8 12.6 Q16.2 14.9 20 14.2" fill="none" stroke="#0b7a1a" stroke-width="2.1" stroke-linecap="round"/></g></svg><span id="n19" class="lb tx" style="left:31.0px;transform:scaleX(0.8491);">InpShowPanel</span><span id="v19" class="lb tx" style="left:418.0px;transform:scaleX(0.838);">true</span></div>
<div class="row sh" style="top:637px"><svg class="ic" width="25" height="24" viewBox="0 0 25 24"><defs><linearGradient id="g20" x1="0" y1="0" x2="1" y2="1"><stop offset="0" stop-color="#bcd8f4"/><stop offset=".55" stop-color="#8bb8e6"/><stop offset="1" stop-color="#5990d0"/></linearGradient></defs><g transform="translate(0,.5)"><path d="M3.2 0.8 H17.4 L24.2 7.6 V22 L22.8 21.2 L19.9 23.6 L17 20 L14.6 21 L12.1 19.3 L9.7 21.1 L8.3 20 L5.3 21.8 L3.4 20.8 L0.8 22.3 V3.2 Q0.8 0.8 3.2 0.8 Z" fill="url(#g20)" stroke="#6199d4" stroke-width="1.1" stroke-linejoin="round"/><path d="M17.4 0.8 V7.6 H24.2 Z" fill="#c8def4" stroke="#76a6dc" stroke-width=".8"/><text x="11.2" y="15.9" text-anchor="middle" font-family="Liberation Sans, sans-serif" font-weight="bold" font-size="10.2" textLength="16.2" lengthAdjust="spacingAndGlyphs" fill="#0c3157" stroke="#0c3157" stroke-width=".4">123</text></g></svg><span id="n20" class="lb tx" style="left:32.0px;transform:scaleX(0.8944);">0 LT,1 RT,2 LB,3 RB</span><span id="v20" class="lb tx" style="left:420.0px;transform:scaleX(0.88);">0</span></div>
<div class="row" style="top:667px"><svg class="ic" width="25" height="24" viewBox="0 0 25 24"><defs><linearGradient id="g21" x1="0" y1="0" x2="1" y2="1"><stop offset="0" stop-color="#bcd8f4"/><stop offset=".55" stop-color="#8bb8e6"/><stop offset="1" stop-color="#5990d0"/></linearGradient></defs><g transform="translate(0,.5)"><path d="M3.2 0.8 H17.4 L24.2 7.6 V22 L22.8 21.2 L19.9 23.6 L17 20 L14.6 21 L12.1 19.3 L9.7 21.1 L8.3 20 L5.3 21.8 L3.4 20.8 L0.8 22.3 V3.2 Q0.8 0.8 3.2 0.8 Z" fill="url(#g21)" stroke="#6199d4" stroke-width="1.1" stroke-linejoin="round"/><path d="M17.4 0.8 V7.6 H24.2 Z" fill="#c8def4" stroke="#76a6dc" stroke-width=".8"/><text x="11.2" y="15.9" text-anchor="middle" font-family="Liberation Sans, sans-serif" font-weight="bold" font-size="10.2" textLength="16.2" lengthAdjust="spacingAndGlyphs" fill="#0c3157" stroke="#0c3157" stroke-width=".4">123</text></g></svg><span id="n21" class="lb tx" style="left:31.0px;transform:scaleX(0.8528);">InpPanelX</span><span id="v21" class="lb tx" style="left:420.0px;transform:scaleX(0.8546);">10</span></div>
<div class="row sh" style="top:697px"><svg class="ic" width="25" height="24" viewBox="0 0 25 24"><defs><linearGradient id="g22" x1="0" y1="0" x2="1" y2="1"><stop offset="0" stop-color="#bcd8f4"/><stop offset=".55" stop-color="#8bb8e6"/><stop offset="1" stop-color="#5990d0"/></linearGradient></defs><g transform="translate(0,.5)"><path d="M3.2 0.8 H17.4 L24.2 7.6 V22 L22.8 21.2 L19.9 23.6 L17 20 L14.6 21 L12.1 19.3 L9.7 21.1 L8.3 20 L5.3 21.8 L3.4 20.8 L0.8 22.3 V3.2 Q0.8 0.8 3.2 0.8 Z" fill="url(#g22)" stroke="#6199d4" stroke-width="1.1" stroke-linejoin="round"/><path d="M17.4 0.8 V7.6 H24.2 Z" fill="#c8def4" stroke="#76a6dc" stroke-width=".8"/><text x="11.2" y="15.9" text-anchor="middle" font-family="Liberation Sans, sans-serif" font-weight="bold" font-size="10.2" textLength="16.2" lengthAdjust="spacingAndGlyphs" fill="#0c3157" stroke="#0c3157" stroke-width=".4">123</text></g></svg><span id="n22" class="lb tx" style="left:31.0px;transform:scaleX(0.8406);">InpPanelY</span><span id="v22" class="lb tx" style="left:420.0px;transform:scaleX(0.8547);">12</span></div>
<div class="row" style="top:727px"><svg class="ic" width="25" height="24" viewBox="0 0 25 24"><defs><linearGradient id="g23" x1="0" y1="0" x2="1" y2="1"><stop offset="0" stop-color="#bcd8f4"/><stop offset=".55" stop-color="#8bb8e6"/><stop offset="1" stop-color="#5990d0"/></linearGradient></defs><g transform="translate(0,.5)"><path d="M3.2 0.8 H17.4 L24.2 7.6 V22 L22.8 21.2 L19.9 23.6 L17 20 L14.6 21 L12.1 19.3 L9.7 21.1 L8.3 20 L5.3 21.8 L3.4 20.8 L0.8 22.3 V3.2 Q0.8 0.8 3.2 0.8 Z" fill="url(#g23)" stroke="#6199d4" stroke-width="1.1" stroke-linejoin="round"/><path d="M17.4 0.8 V7.6 H24.2 Z" fill="#c8def4" stroke="#76a6dc" stroke-width=".8"/><text x="11.2" y="15.9" text-anchor="middle" font-family="Liberation Sans, sans-serif" font-weight="bold" font-size="10.2" textLength="16.2" lengthAdjust="spacingAndGlyphs" fill="#0c3157" stroke="#0c3157" stroke-width=".4">123</text></g></svg><span id="n23" class="lb tx" style="left:31.0px;transform:scaleX(0.8577);">default 3</span><span id="v23" class="lb tx" style="left:420.0px;transform:scaleX(0.88);">3</span></div>
<div class="row sh" style="top:757px"><svg class="ic" width="25" height="24" viewBox="0 0 25 24"><defs><linearGradient id="g24" x1="0" y1="0" x2="1" y2="1"><stop offset="0" stop-color="#bdf7bd"/><stop offset=".55" stop-color="#7fe088"/><stop offset="1" stop-color="#45c454"/></linearGradient></defs><g transform="translate(0,.5)"><path d="M3.2 0.8 H17.4 L24.2 7.6 V22 L22.8 21.2 L19.9 23.6 L17 20 L14.6 21 L12.1 19.3 L9.7 21.1 L8.3 20 L5.3 21.8 L3.4 20.8 L0.8 22.3 V3.2 Q0.8 0.8 3.2 0.8 Z" fill="url(#g24)" stroke="#4fc45c" stroke-width="1.1" stroke-linejoin="round"/><path d="M17.4 0.8 V7.6 H24.2 Z" fill="#c6f6c8" stroke="#63cc6e" stroke-width=".8"/><path d="M3.6 14.6 L6.4 13.8 L11.4 7.9" fill="none" stroke="#0b7a1a" stroke-width="2.3" stroke-linecap="round" stroke-linejoin="round"/><path d="M13.8 12.6 Q16.2 14.9 20 14.2" fill="none" stroke="#0b7a1a" stroke-width="2.1" stroke-linecap="round"/></g></svg><span id="n24" class="lb tx" style="left:31.0px;transform:scaleX(0.87);">ENTRY/SL/TP solo per il più recente</span><span id="v24" class="lb tx" style="left:418.0px;transform:scaleX(0.838);">true</span></div>
<div class="row" style="top:787px"><svg class="ic" width="25" height="24" viewBox="0 0 25 24"><defs><linearGradient id="g25" x1="0" y1="0" x2="1" y2="1"><stop offset="0" stop-color="#bcd8f4"/><stop offset=".55" stop-color="#8bb8e6"/><stop offset="1" stop-color="#5990d0"/></linearGradient></defs><g transform="translate(0,.5)"><path d="M3.2 0.8 H17.4 L24.2 7.6 V22 L22.8 21.2 L19.9 23.6 L17 20 L14.6 21 L12.1 19.3 L9.7 21.1 L8.3 20 L5.3 21.8 L3.4 20.8 L0.8 22.3 V3.2 Q0.8 0.8 3.2 0.8 Z" fill="url(#g25)" stroke="#6199d4" stroke-width="1.1" stroke-linejoin="round"/><path d="M17.4 0.8 V7.6 H24.2 Z" fill="#c8def4" stroke="#76a6dc" stroke-width=".8"/><text x="11.2" y="15.9" text-anchor="middle" font-family="Liberation Sans, sans-serif" font-weight="bold" font-size="10.2" textLength="16.2" lengthAdjust="spacingAndGlyphs" fill="#0c3157" stroke="#0c3157" stroke-width=".4">123</text></g></svg><span id="n25" class="lb tx" style="left:31.0px;transform:scaleX(0.8371);">estensione a destra (barre)</span><span id="v25" class="lb tx" style="left:420.0px;transform:scaleX(0.88);">2</span></div>
 </div></div>
<svg class="abs" style="left:1063px;top:972px" width="16" height="16" viewBox="0 0 16 16" fill="#bdbdbd"><rect x="11" y="2" width="2.6" height="2.6"/><rect x="6.4" y="6.6" width="2.6" height="2.6"/><rect x="11" y="6.6" width="2.6" height="2.6"/><rect x="1.8" y="11.2" width="2.6" height="2.6"/><rect x="6.4" y="11.2" width="2.6" height="2.6"/><rect x="11" y="11.2" width="2.6" height="2.6"/></svg>
 <div class="abs" style="left:0;top:0;width:4px;height:4px;background:linear-gradient(135deg,#b0b0b0 30%,rgba(176,176,176,0) 52%)"></div>
 <div class="btn" style="left:901px;top:838px;width:154px;height:31px;line-height:29px"></div><span id="bCarica" class="lb bt" style="left:954.0px;transform:scaleX(0.8067);top:843.0px;">Carica</span>
 <div class="btn" style="left:901px;top:887px;width:154px;height:31px;line-height:29px"></div><span id="bSalva" class="lb bt" style="left:957.0px;transform:scaleX(0.8569);top:892.5px;">Salva</span>
 <div class="btn" style="left:715px;top:944px;width:109px;height:31px;line-height:27px;border:2px solid #0067c0"></div><span id="bOK" class="lb bt" style="left:757.0px;transform:scaleX(0.829);top:949.0px;">OK</span>
 <div class="btn" style="left:837px;top:944px;width:108px;height:31px;line-height:29px"></div><span id="bAnn" class="lb bt" style="left:865.0px;transform:scaleX(0.8046);top:949.0px;">Annulla</span>
 <div class="btn" style="left:958px;top:944px;width:108px;height:31px;line-height:29px"></div><span id="bRes" class="lb bt" style="left:984.0px;transform:scaleX(0.8223);top:949.0px;">Resetta</span>
</div>
</body></html>
